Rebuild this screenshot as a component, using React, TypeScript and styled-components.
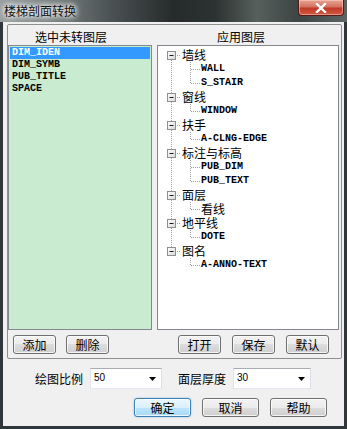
import styled, { createGlobalStyle } from "styled-components";

const GlobalStyle = createGlobalStyle`
  html, body {
    margin: 0;
    padding: 0;
    background: #2f3538;
  }
  body {
    font-family: "Noto Sans CJK SC", "Liberation Sans", sans-serif;
    font-size: 12px;
  }
  * {
    box-sizing: border-box;
  }
`;

const Window = styled.div`
  width: 347px;
  height: 429px;
  display: flex;
  flex-direction: column;
  overflow: hidden;
`;

const TitleBar = styled.div`
  height: 22px;
  flex: none;
  display: flex;
  justify-content: space-between;
  align-items: flex-start;
  padding: 0 3px 0 4px;
  background: linear-gradient(
    to right,
    #9aa0a0 0%,
    #7c8383 14%,
    #4b5253 32%,
    #262a2b 50%,
    #2c3231 62%,
    #56605c 74%,
    #3d4444 86%,
    #5e6464 100%
  );
`;

const Title = styled.span`
  line-height: 22px;
  font-size: 12px;
  color: #111;
  text-shadow: 0 0 4px #fff, 0 0 6px #fff, 0 0 8px rgba(255, 255, 255, 0.8);
`;

const CloseButton = styled.div`
  width: 46px;
  height: 16px;
  display: flex;
  align-items: center;
  justify-content: center;
  border: 1px solid #5a1a14;
  border-top: 0;
  border-radius: 0 0 4px 4px;
  background: linear-gradient(#e7a595 0%, #d4715f 45%, #c0392a 55%, #d25a40 100%);
  box-shadow: inset 0 0 0 1px rgba(255, 220, 210, 0.45);
`;

const Frame = styled.div`
  flex: 1;
  display: flex;
  padding: 0 3px 3px 3px;
  background: #30373a;
`;

const Client = styled.div`
  flex: 1;
  display: flex;
  flex-direction: column;
  padding: 2px 2px 0 4px;
  background: #f0f0f0;
`;

const GroupBox = styled.div`
  display: grid;
  grid-template-columns: 144px 182px;
  grid-template-rows: 20px 285px 19px;
  column-gap: 5px;
  row-gap: 5px;
  row-gap: 0;
  padding: 0 2px 9px 0;
  border: 1px solid #8e8f8f;
  border-radius: 2px;
`;

const Header = styled.div<{ $indent: number }>`
  padding-left: ${(p) => p.$indent}px;
  padding-top: 5px;
  line-height: 14px;
  font-size: 12px;
  color: #000;
`;

const ListPanel = styled.div<{ $bg: string }>`
  border: 1px solid #828790;
  background: ${(p) => p.$bg};
  padding: 1px 1px;
  overflow: hidden;
`;

const ListItem = styled.div<{ $selected?: boolean }>`
  height: 12px;
  line-height: 12px;
  padding-left: 2px;
  font-family: "Liberation Mono", "DejaVu Sans Mono", monospace;
  font-weight: bold;
  font-size: 10px;
  color: ${(p) => (p.$selected ? "#fff" : "#000")};
  background: ${(p) => (p.$selected ? "#3399ff" : "transparent")};
`;

const TreePanel = styled(ListPanel)`
  padding: 2px 0 0 4px;
`;

const TreeRow = styled.div`
  height: 14px;
  display: flex;
  align-items: center;
`;

const TreeLabel = styled.span<{ $cjk: boolean }>`
  margin-left: 1px;
  line-height: 14px;
  white-space: nowrap;
  color: #000;
  font-family: ${(p) =>
    p.$cjk
      ? '"Noto Sans CJK SC", sans-serif'
      : '"Liberation Mono", "DejaVu Sans Mono", monospace'};
  font-size: ${(p) => (p.$cjk ? "12px" : "10px")};
  font-weight: ${(p) => (p.$cjk ? "normal" : "bold")};
`;

const ButtonRow = styled.div<{ $align: string; $pad: number }>`
  display: flex;
  justify-content: ${(p) => p.$align};
  gap: ${(p) => (p.$align === "flex-end" ? 11 : 10)}px;
  padding: ${(p) => (p.$align === "flex-end" ? `0 ${p.$pad}px 0 0` : `0 0 0 ${p.$pad}px`)};
  margin-top: 5px;
`;

const Button = styled.button<{ $w: number; $primary?: boolean }>`
  width: ${(p) => p.$w}px;
  height: 19px;
  padding: 0;
  font-family: "Noto Sans CJK SC", sans-serif;
  font-size: 12px;
  line-height: 16px;
  color: #000;
  border: 1px solid ${(p) => (p.$primary ? "#3c7fb1" : "#707070")};
  border-radius: 3px;
  background: ${(p) =>
    p.$primary
      ? "linear-gradient(#eaf6fd 0%, #d9f0fc 50%, #bee6fd 50%, #a7d9f5 100%)"
      : "linear-gradient(#f2f2f2 0%, #ebebeb 50%, #dddddd 50%, #cfcfcf 100%)"};
  box-shadow: inset 0 0 0 1px rgba(255, 255, 255, 0.75)
    ${(p) => (p.$primary ? ", 0 0 2px rgba(60, 160, 230, 0.6)" : "")};
`;

const OptionRow = styled.div`
  display: flex;
  align-items: center;
  margin-top: 9px;
  padding-left: 28px;
  height: 21px;
`;

const FieldLabel = styled.span<{ $gapLeft: number }>`
  margin-left: ${(p) => p.$gapLeft}px;
  margin-right: 7px;
  font-size: 12px;
  line-height: 14px;
  color: #000;
`;

const Combo = styled.div<{ $w: number }>`
  width: ${(p) => p.$w}px;
  height: 21px;
  display: flex;
  align-items: center;
  justify-content: space-between;
  padding: 0 5px 0 3px;
  background: #fff;
  border: 1px solid;
  border-color: #abadb3 #dbdfe6 #e3e9ef #e2e3ea;
`;

const ComboText = styled.span`
  align-self: flex-start;
  padding-top: 3px;
  font-family: "Liberation Sans", sans-serif;
  font-size: 10px;
  line-height: 11px;
  color: #000;
`;

const ActionRow = styled.div`
  display: flex;
  justify-content: flex-end;
  gap: 11px;
  margin-top: 9px;
  padding-right: 15px;
`;

type LayerGroup = { label: string; children: string[] };

const leftLayers = ["DIM_IDEN", "DIM_SYMB", "PUB_TITLE", "SPACE"];

const layerTree: LayerGroup[] = [
  { label: "墙线", children: ["WALL", "S_STAIR"] },
  { label: "窗线", children: ["WINDOW"] },
  { label: "扶手", children: ["A-CLNG-EDGE"] },
  { label: "标注与标高", children: ["PUB_DIM", "PUB_TEXT"] },
  { label: "面层", children: ["看线"] },
  { label: "地平线", children: ["DOTE"] },
  { label: "图名", children: ["A-ANNO-TEXT"] },
];

const isCjk = (s: string) => /[\u4e00-\u9fff]/.test(s);

function Guide({
  up,
  down,
  right,
  box,
}: {
  up?: boolean;
  down?: boolean;
  right?: boolean;
  box?: boolean;
}) {
  const line = { stroke: "#a0a0a0", strokeDasharray: "1 1", strokeWidth: 1 };
  return (
    <svg width="19" height="14" viewBox="0 0 19 14" style={{ flex: "none", display: "block" }}>
      {up && <line x1="9.5" y1="0" x2="9.5" y2="7" {...line} />}
      {down && <line x1="9.5" y1="8" x2="9.5" y2="14" {...line} />}
      {right && <line x1={box ? 15 : 10} y1="7.5" x2="19" y2="7.5" {...line} />}
      {box && (
        <>
          <defs>
            <linearGradient id="expander" x1="0" y1="0" x2="1" y2="1">
              <stop offset="0" stopColor="#ffffff" />
              <stop offset="1" stopColor="#d8d8d8" />
            </linearGradient>
          </defs>
          <rect x="5.5" y="3.5" width="8" height="8" fill="url(#expander)" stroke="#8f8f8f" />
          <line x1="7.5" y1="7.5" x2="11.5" y2="7.5" stroke="#1a1a1a" />
        </>
      )}
    </svg>
  );
}

function App() {
  return (
    <Window>
      <GlobalStyle />
      <TitleBar>
        <Title>楼梯剖面转换</Title>
        <CloseButton>
          <svg width="12" height="10" viewBox="0 0 12 10">
            <path d="M2 1 L10 9 M10 1 L2 9" stroke="#fff" strokeWidth="2.4" strokeLinecap="square" />
          </svg>
        </CloseButton>
      </TitleBar>
      <Frame>
        <Client>
          <GroupBox>
            <Header $indent={27}>选中未转图层</Header>
            <Header $indent={60}>应用图层</Header>

            <ListPanel $bg="#c9ebd0">
              {leftLayers.map((name, i) => (
                <ListItem key={name} $selected={i === 0}>
                  {name}
                </ListItem>
              ))}
            </ListPanel>

            <TreePanel $bg="#ffffff">
              {layerTree.map((group, gi) => {
                const lastGroup = gi === layerTree.length - 1;
                return (
                  <div key={group.label}>
                    <TreeRow>
                      <Guide up={gi > 0} down={!lastGroup} right box />
                      <TreeLabel $cjk>{group.label}</TreeLabel>
                    </TreeRow>
                    {group.children.map((child, ci) => (
                      <TreeRow key={child}>
                        <Guide up={!lastGroup} down={!lastGroup} />
                        <Guide up down={ci < group.children.length - 1} right />
                        <TreeLabel $cjk={isCjk(child)}>{child}</TreeLabel>
                      </TreeRow>
                    ))}
                  </div>
                );
              })}
            </TreePanel>

            <ButtonRow $align="flex-start" $pad={5}>
              <Button $w={43}>添加</Button>
              <Button $w={43}>删除</Button>
            </ButtonRow>
            <ButtonRow $align="flex-end" $pad={10}>
              <Button $w={43}>打开</Button>
              <Button $w={43}>保存</Button>
              <Button $w={43}>默认</Button>
            </ButtonRow>
          </GroupBox>

          <OptionRow>
            <FieldLabel $gapLeft={0}>绘图比例</FieldLabel>
            <Combo $w={72}>
              <ComboText>50</ComboText>
              <svg width="7" height="4" viewBox="0 0 7 4">
                <path d="M0 0 H7 L3.5 4 Z" fill="#000" />
              </svg>
            </Combo>
            <FieldLabel $gapLeft={16}>面层厚度</FieldLabel>
            <Combo $w={78}>
              <ComboText>30</ComboText>
              <svg width="7" height="4" viewBox="0 0 7 4">
                <path d="M0 0 H7 L3.5 4 Z" fill="#000" />
              </svg>
            </Combo>
          </OptionRow>

          <ActionRow>
            <Button $w={57} $primary>
              确定
            </Button>
            <Button $w={57}>取消</Button>
            <Button $w={57}>帮助</Button>
          </ActionRow>
        </Client>
      </Frame>
    </Window>
  );
}

export default App;
